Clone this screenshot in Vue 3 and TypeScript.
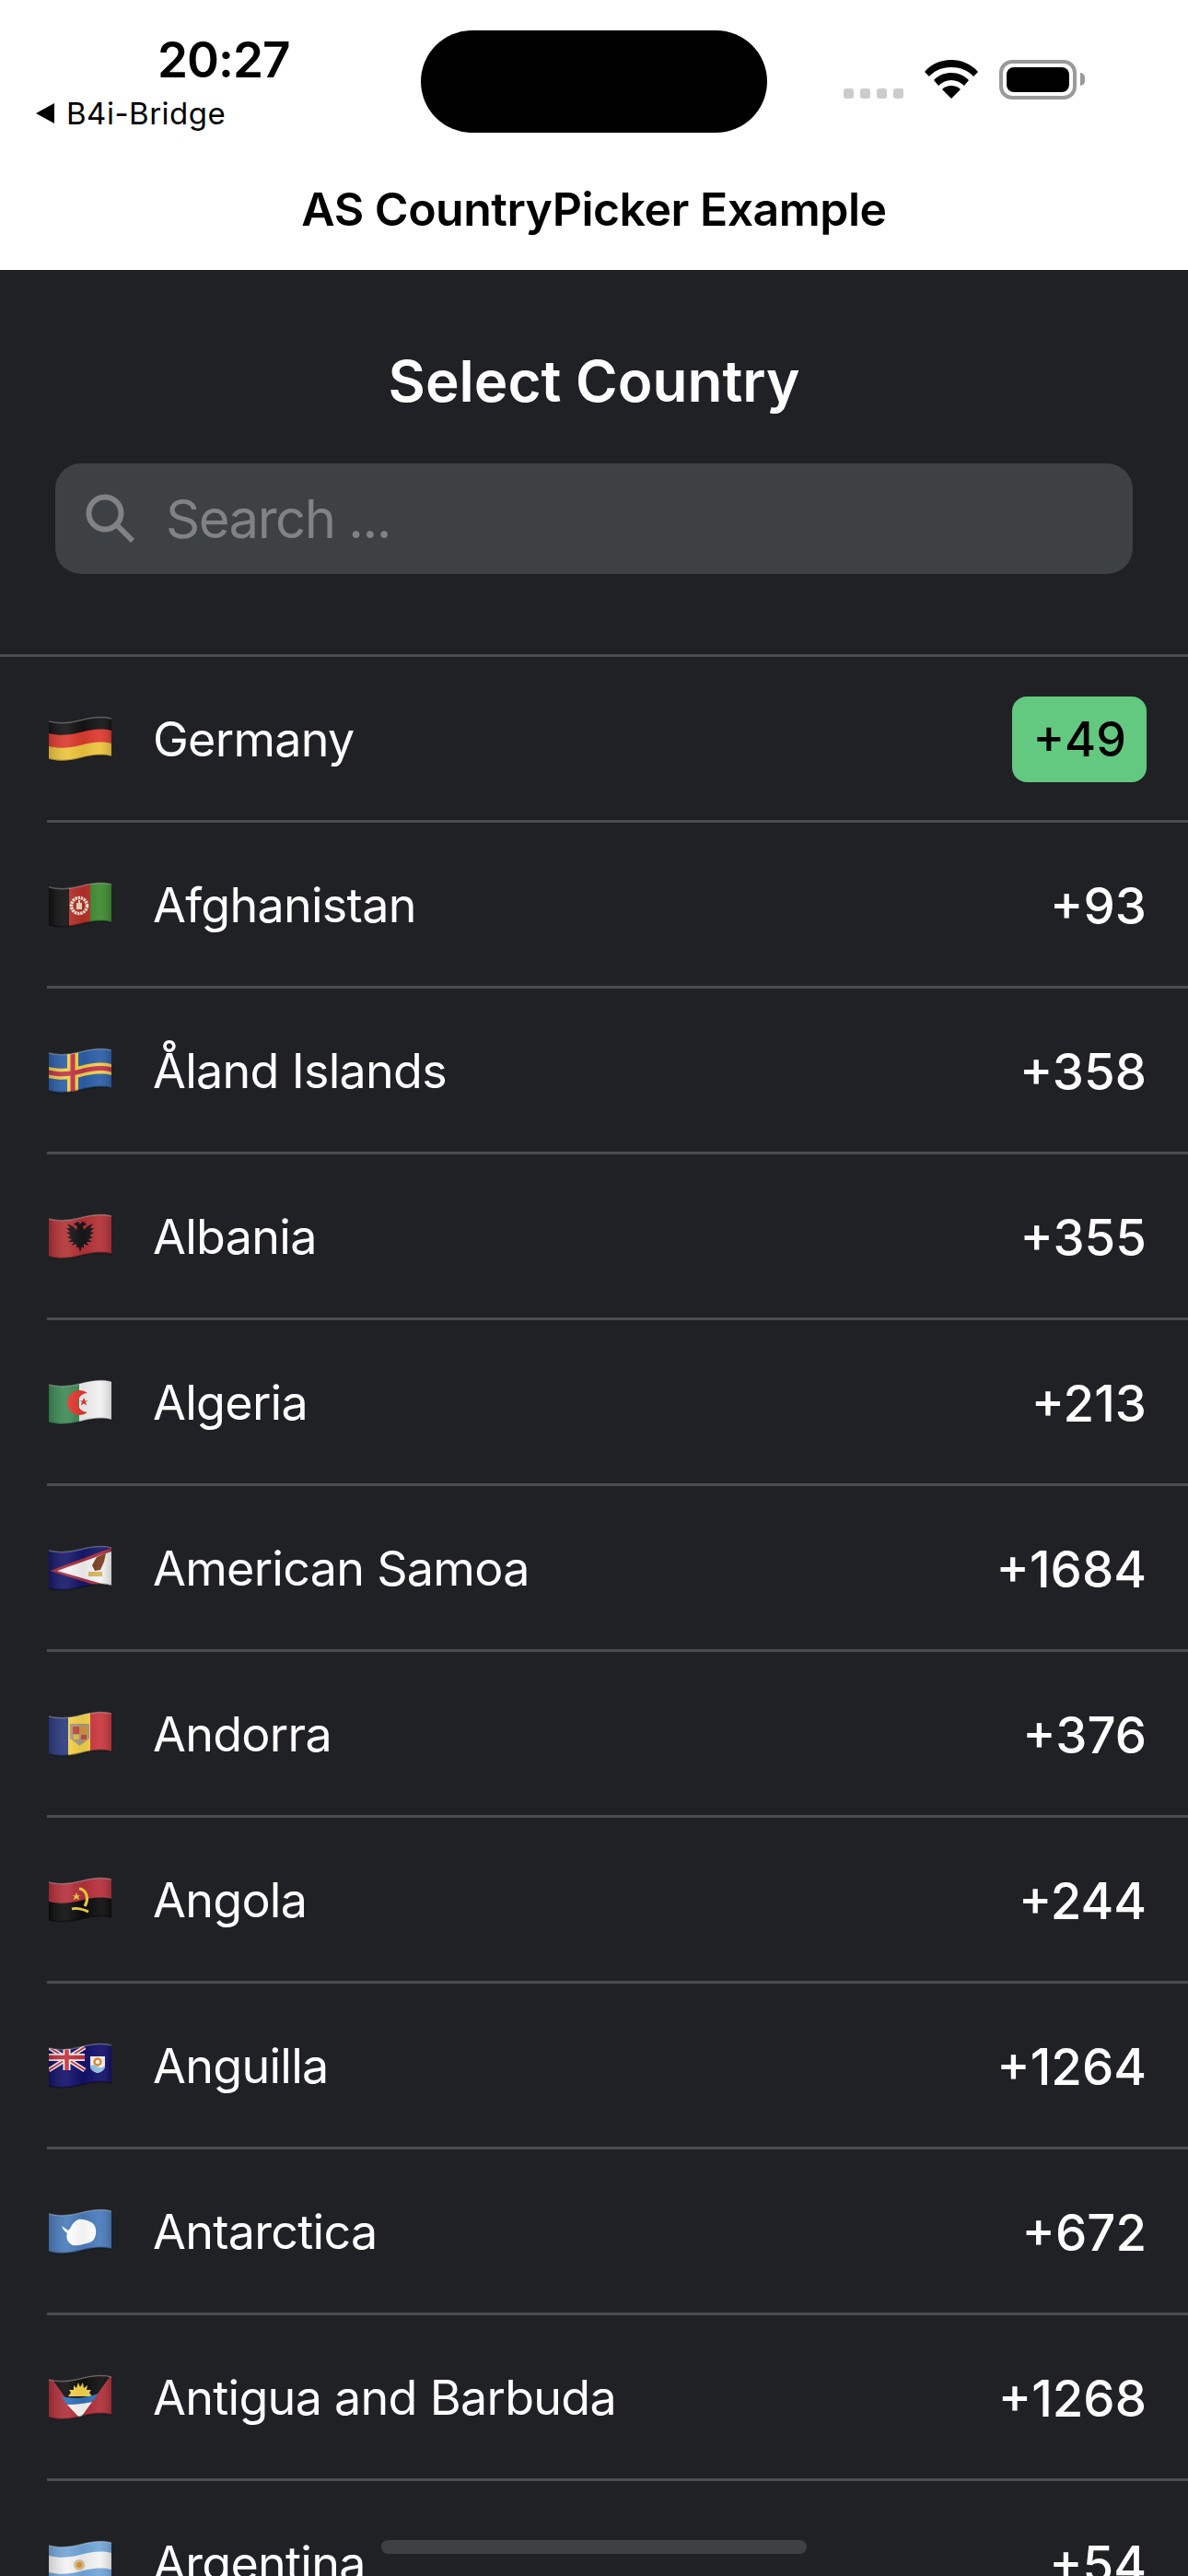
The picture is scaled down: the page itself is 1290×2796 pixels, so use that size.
<template>
  <div class="page">
    <svg class="defs" width="0" height="0" aria-hidden="true">
      <defs>
        <clipPath id="wave"><path :d="band(5, 46)" /></clipPath>
        <linearGradient id="sheen" x1="0" y1="0" x2="1" y2="0">
          <stop offset="0" stop-color="#000" stop-opacity=".18" />
          <stop offset=".3" stop-color="#fff" stop-opacity=".08" />
          <stop offset=".55" stop-color="#000" stop-opacity=".06" />
          <stop offset=".8" stop-color="#fff" stop-opacity=".06" />
          <stop offset="1" stop-color="#000" stop-opacity=".16" />
        </linearGradient>
      </defs>
    </svg>

    <header class="top">
      <div class="status">
        <div class="status-left">
          <div class="time">20:27</div>
          <div class="back"><span class="back-arrow"></span>B4i-Bridge</div>
        </div>
        <div class="notch"></div>
        <div class="status-right">
          <div class="dots"><i></i><i></i><i></i><i></i></div>
          <svg class="wifi" width="58" height="42" viewBox="0 0 58 42">
            <path d="M29 0C18 0 8 4 0 13l5 5C11 11 20 8 29 8s18 3 24 10l5-5C50 4 40 0 29 0Z" />
            <path d="M29 14c-8 0-14 3-19 8l5 6c4-4 9-6 14-6s10 2 14 6l5-6c-5-5-11-8-19-8Z" />
            <path d="M29 28c-4 0-7 1-10 4l10 10 10-10c-3-3-6-4-10-4Z" />
          </svg>
          <div class="battery"><div class="battery-fill"></div></div>
          <div class="battery-cap"></div>
        </div>
      </div>
      <div class="app-title">AS CountryPicker Example</div>
    </header>

    <main class="picker">
      <h1 class="picker-title">Select Country</h1>
      <div class="search">
        <svg class="search-icon" width="56" height="56" viewBox="0 0 56 56">
          <circle cx="22" cy="22" r="17.5" />
          <path d="M34.5 34.5 52 52" />
        </svg>
        <span>Search ...</span>
      </div>
      <ul class="list">
        <li v-for="(c, i) in countries" :key="c.name" class="row" :class="{ first: i === 0 }">
          <svg class="flag" width="68" height="52" viewBox="0 0 68 52">
            <g clip-path="url(#wave)">
              <component :is="s.tag" v-for="(s, j) in c.flag" :key="j" v-bind="s.attrs" />
              <rect width="68" height="52" fill="url(#sheen)" />
            </g>
            <path :d="edge(5)" class="edge-top" />
            <path :d="edge(46)" class="edge-bottom" />
          </svg>
          <span class="name">{{ c.name }}</span>
          <span class="code" :class="{ selected: i === 0 }">{{ c.code }}</span>
        </li>
      </ul>
    </main>
    <div class="home-bar"></div>
  </div>
</template>

<script setup lang="ts">
interface Shape {
  tag: string;
  attrs: Record<string, string | number>;
}

interface Country {
  name: string;
  code: string;
  flag: Shape[];
}

// one wavy stripe of the flag, same curve top and bottom
function band(y0: number, y1: number): string {
  return `M0 ${y0 + 1}C12 ${y0 + 4} 22 ${y0 + 3} 34 ${y0}S56 ${y0 - 5} 68 ${y0 - 2}V${y1 - 2}C56 ${y1 - 5} 46 ${y1 - 3} 34 ${y1}S12 ${y1 + 4} 0 ${y1 + 1}Z`;
}

function edge(y: number): string {
  return `M0 ${y + 1}C12 ${y + 4} 22 ${y + 3} 34 ${y}S56 ${y - 5} 68 ${y - 2}`;
}

const path = (d: string, fill: string, extra = {}): Shape => ({ tag: "path", attrs: { d, fill, ...extra } });
const stripe = (y0: number, y1: number, fill: string) => path(band(y0, y1), fill);
const rect = (x: number, y: number, width: number, height: number, fill: string): Shape => ({
  tag: "rect",
  attrs: { x, y, width, height, fill },
});
const circle = (cx: number, cy: number, r: number, fill: string, extra = {}): Shape => ({
  tag: "circle",
  attrs: { cx, cy, r, fill, ...extra },
});
const line = (d: string, stroke: string, width: number): Shape => ({
  tag: "path",
  attrs: { d, stroke, "stroke-width": width, fill: "none" },
});

const star = "M0-5 1.3-1.6 5-1.6 2-.6 3.2 3.4 0 1.2-3.2 3.4-2-.6-5-1.6-1.3-1.6Z";

const countries: Country[] = [
  {
    name: "Germany",
    code: "+49",
    flag: [stripe(0, 19, "#141414"), stripe(18, 33, "#dd3b30"), stripe(32, 52, "#edc53f")],
  },
  {
    name: "Afghanistan",
    code: "+93",
    flag: [
      rect(0, 0, 22, 52, "#111"),
      rect(22, 0, 23, 52, "#b5302a"),
      rect(45, 0, 23, 52, "#3f8a30"),
      circle(33, 26, 8.5, "none", { stroke: "#f1e6d4", "stroke-width": 3.5, "stroke-dasharray": "2.4 .8" }),
      rect(30, 23, 6, 7, "#e8d9c0"),
      rect(32, 20, 2, 3, "#e8d9c0"),
    ],
  },
  {
    name: "Åland Islands",
    code: "+358",
    flag: [
      rect(0, 0, 68, 52, "#2d5fa8"),
      stripe(20, 32, "#f0cf45"),
      rect(20, 0, 12, 52, "#f0cf45"),
      stripe(23.5, 28.5, "#c2344f"),
      rect(23.5, 0, 5, 52, "#c2344f"),
    ],
  },
  {
    name: "Albania",
    code: "+355",
    flag: [
      rect(0, 0, 68, 52, "#b33236"),
      path(
        "M34 42 32 36 30 38V33L25 35 27 31H21L25 28 20 26 24 24 19 21 23 20 19 16H23L20 11 26 14 30 18 31 14 27 12 29 10 32 9 34 12 36 9 39 10 41 12 37 14 38 18 42 14 48 11 45 16H49L45 20 49 21 44 24 48 26 43 28 47 31H41L43 35 38 33V38L36 36Z",
        "#16161a",
      ),
    ],
  },
  {
    name: "Algeria",
    code: "+213",
    flag: [
      rect(0, 0, 33, 52, "#3f8a56"),
      rect(33, 0, 35, 52, "#f1f1f1"),
      path("M42 15A13.5 13.5 0 1 0 42 36A10.5 10.5 0 1 1 42 15Z", "#e0392f"),
      path(star, "#e0392f", { transform: "translate(38 25)" }),
    ],
  },
  {
    name: "American Samoa",
    code: "+1684",
    flag: [
      rect(0, 0, 68, 52, "#16186a"),
      path("M1 28 68 3V49Z", "#a83040"),
      path("M9 28 68 7V45Z", "#f3f3f3"),
      path("M47 22 52 13 62 9 60 18 56 27 50 28Z", "#7a3d1e"),
      rect(43, 29, 15, 5, "#d4b45a"),
    ],
  },
  {
    name: "Andorra",
    code: "+376",
    flag: [
      rect(0, 0, 21, 52, "#2b3a80"),
      rect(21, 0, 24, 52, "#f3d14a"),
      rect(45, 0, 23, 52, "#c9383f"),
      path("M23 14H44V30L33.5 38 23 30Z", "#a89a80"),
      rect(26, 17, 7, 8, "#c94a3a"),
      rect(35, 17, 6, 8, "#e0902a"),
      rect(35, 26, 6, 5, "#c94a3a"),
      rect(27, 26, 6, 5, "#e0c040"),
    ],
  },
  {
    name: "Angola",
    code: "+244",
    flag: [
      stripe(0, 27, "#b5303c"),
      stripe(26, 52, "#0d0d0d"),
      line("M33 13C41 14 44 24 39 32", "#f0cf3a", 3.2),
      line("M25 35C32 33 38 36 43 38", "#f0cf3a", 2.8),
      path(star, "#f0cf3a", { transform: "translate(30 22)" }),
    ],
  },
  {
    name: "Anguilla",
    code: "+1264",
    flag: [
      rect(0, 0, 68, 52, "#13116a"),
      line("M0 5 39 30M39 5 0 30", "#f4f4f4", 5),
      line("M0 5 39 30M39 5 0 30", "#c8303a", 1.8),
      line("M19.5 0V30M0 16H39", "#f4f4f4", 8),
      line("M19.5 0V30M0 16H39", "#c8303a", 4.5),
      path("M45 15H61V25Q61 31 53 33 45 31 45 25Z", "#f2f2f2"),
      path("M45 25Q49 23 53 26T61 25Q61 31 53 33 45 31 45 25Z", "#8fbde0"),
      circle(53, 21, 3.5, "none", { stroke: "#d8842a", "stroke-width": 2.4 }),
    ],
  },
  {
    name: "Antarctica",
    code: "+672",
    flag: [
      rect(0, 0, 68, 52, "#4a7cbc"),
      path(
        "M15 16 22 21C25 19 26 13 30 11 33 7 41 9 45 11 51 13 53 19 52 25 51 31 48 34 42 35 37 36 33 38 27 37 22 35 19 29 21 24 18 22 16 19 15 16Z",
        "#fff",
        { transform: "translate(-1 3)" },
      ),
    ],
  },
  {
    name: "Antigua and Barbuda",
    code: "+1268",
    flag: [
      rect(0, 0, 68, 52, "#b1303a"),
      path("M0 0H68L34 48Z", "#101010"),
      path("M21 24 24 20 22 17 27 17 27 12 30 15 32 9 34 14 37 9 38 15 42 12 41 17 46 17 44 20 47 24Z", "#f5d34a"),
      path("M13 24C25 27 40 26 54 21L47 30C37 32 28 33 20 33Z", "#2f72c0"),
      path("M20 33C28 33 37 32 47 30L34 48Z", "#f6f6f6"),
    ],
  },
  {
    name: "Argentina",
    code: "+54",
    flag: [
      stripe(0, 17, "#74a7da"),
      stripe(16, 35, "#f3f3f3"),
      stripe(34, 52, "#74a7da"),
      circle(33, 27, 6, "#dcc09a"),
      circle(33, 27, 3, "#d9962e"),
    ],
  },
];
</script>

<style scoped>
.page {
  position: relative;
  width: 1290px;
  height: 2796px;
  overflow: hidden;
  background: #202125;
  font-family: Inter, "Liberation Sans", sans-serif;
}

.defs {
  display: block;
}

.top {
  height: 293px;
  background: #fff;
  color: #000;
}

.status {
  display: flex;
  height: 195px;
  padding-top: 33px;
  box-sizing: border-box;
}

.status-left {
  width: 457px;
  padding-top: 2px;
}

.time {
  padding-left: 171px;
  font-size: 53px;
  font-weight: 600;
  line-height: 60px;
  letter-spacing: -1px;
}

.back {
  display: flex;
  align-items: center;
  gap: 13px;
  margin-top: 8px;
  padding-left: 39px;
  font-size: 33px;
  line-height: 40px;
  letter-spacing: 0.5px;
}

.back-arrow {
  width: 0;
  height: 0;
  border-top: 11px solid transparent;
  border-bottom: 11px solid transparent;
  border-right: 20px solid #000;
}

.notch {
  width: 376px;
  height: 111px;
  border-radius: 56px;
  background: #000;
}

.status-right {
  display: flex;
  align-items: flex-start;
  padding: 32px 0 0 83px;
}

.dots {
  display: flex;
  gap: 7px;
  margin-top: 31px;
}

.dots i {
  display: block;
  width: 11px;
  height: 11px;
  border-radius: 3px;
  background: #ccc;
}

.wifi {
  margin-left: 23px;
  fill: #000;
}

.battery {
  width: 84px;
  height: 43px;
  margin-left: 23px;
  padding: 4px;
  box-sizing: border-box;
  border: 4px solid #9a9a9a;
  border-radius: 14px;
}

.battery-fill {
  height: 100%;
  border-radius: 8px;
  background: #000;
}

.battery-cap {
  width: 5px;
  height: 14px;
  margin: 14px 0 0 4px;
  border-radius: 0 7px 7px 0;
  background: #9a9a9a;
}

.app-title {
  padding-top: 3px;
  text-align: center;
  font-size: 50px;
  font-weight: 600;
  line-height: 58px;
  letter-spacing: -0.5px;
}

.picker {
  padding-top: 86px;
}

.picker-title {
  margin: 0;
  text-align: center;
  color: #fff;
  font-size: 62px;
  font-weight: 600;
  line-height: 70px;
}

.search {
  display: flex;
  align-items: center;
  gap: 32px;
  height: 120px;
  margin: 54px 60px 87px;
  padding-left: 32px;
  border-radius: 28px;
  background: #3e4144;
  color: #808284;
  font-size: 58px;
  letter-spacing: -1.5px;
}

.search-icon {
  fill: none;
  stroke: #808284;
  stroke-width: 6;
}

.list {
  margin: 0;
  padding: 0;
  list-style: none;
}

.row {
  display: flex;
  align-items: center;
  height: 175px;
  margin-left: 51px;
  padding-top: 2px;
  padding-right: 45px;
  border-top: 3px solid #4b4c50;
  color: #fff;
}

.row.first {
  margin-left: 0;
  padding-left: 51px;
}

.flag {
  flex: none;
  margin-left: 2px;
}

.edge-top {
  fill: none;
  stroke: rgba(255, 255, 255, 0.28);
  stroke-width: 1.5;
}

.edge-bottom {
  fill: none;
  stroke: rgba(0, 0, 0, 0.3);
  stroke-width: 2;
}

.name {
  flex: 1;
  margin-left: 45px;
  font-size: 52px;
  letter-spacing: -0.7px;
}

.code {
  font-size: 54.5px;
  font-weight: 500;
}

.code.selected {
  padding: 0 22px;
  font-size: 52px;
  line-height: 93px;
  border-radius: 16px;
  background: #63c980;
  color: #000;
}

.home-bar {
  position: absolute;
  left: 414px;
  bottom: 24px;
  width: 462px;
  height: 15px;
  border-radius: 8px;
  background: #3f4043;
}
</style>

<style>
html,
body {
  margin: 0;
  background: #202125;
}
</style>
